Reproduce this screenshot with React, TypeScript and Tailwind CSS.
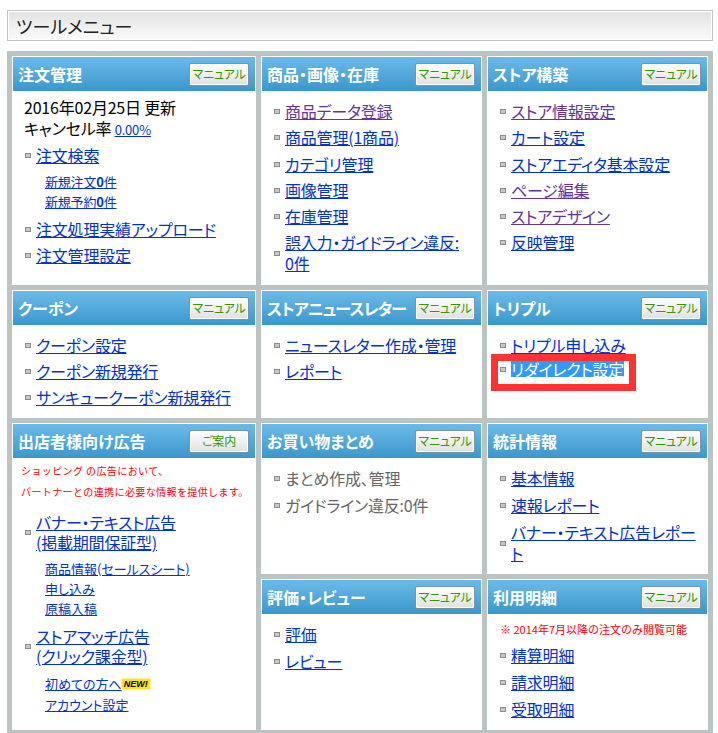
import React from "react";

const LINK = "underline text-[#0033cc]";
const VISITED = "underline text-[#663399]";

function Bullet() {
  return <span className="block w-[6px] h-[5px] shrink-0 border border-[#8c8c8c] bg-[#c8c8c8]" />;
}

function Item({
  children,
  cls = LINK,
  className = "",
}: {
  children: React.ReactNode;
  cls?: string;
  className?: string;
}) {
  return (
    <li className={`flex items-center ${className}`}>
      <Bullet />
      <a href="#" className={`ml-[5px] ${cls}`}>
        {children}
      </a>
    </li>
  );
}

function PlainItem({ children }: { children: React.ReactNode }) {
  return (
    <li className="flex items-center">
      <Bullet />
      <span className="ml-[5px] text-[#666666]">{children}</span>
    </li>
  );
}

function HeadBtn({ label }: { label: string }) {
  return (
    <span className="w-[60px] h-[23px] shrink-0 flex items-center justify-center whitespace-nowrap border border-[#7b93a7] rounded-[2px] bg-linear-to-b from-white to-[#e0e0e0] shadow-[inset_0_0_0_1px_#ffffff] text-[12px] tracking-[-0.2px] leading-none text-[#339900]">
      {label}
    </span>
  );
}

function Panel({
  title,
  btn = "マニュアル",
  className = "",
  titleClass = "",
  children,
}: {
  title: string;
  btn?: string;
  className?: string;
  titleClass?: string;
  children?: React.ReactNode;
}) {
  return (
    <section className={`bg-white p-px flex flex-col min-h-0 ${className}`}>
      <div className="h-[34px] shrink-0 flex items-center justify-between pl-[5px] pr-[6px] bg-linear-to-b from-[#6bbbe9] to-[#3a97cc]">
        <h2 className={`text-white text-[16px] font-bold leading-none whitespace-nowrap ${titleClass}`}>{title}</h2>
        <HeadBtn label={btn} />
      </div>
      <div className="flex-1">{children}</div>
    </section>
  );
}

function List({ children, gap, pt = "pt-[10px]" }: { children: React.ReactNode; gap: string; pt?: string }) {
  return (
    <ul className={`pl-[12px] ${pt} flex flex-col ${gap} text-[16px] leading-[21px] tracking-[-0.2px]`}>{children}</ul>
  );
}

export default function App() {
  return (
    <div className="w-[718px] min-h-[733px] bg-white overflow-hidden font-['Noto_Sans_CJK_JP','Noto_Sans',sans-serif] [font-feature-settings:'palt'] text-black">
      <div className="ml-[7px] mt-[10px] w-[706px] h-[31px] border border-[#c2c2c2] bg-linear-to-b from-[#e2e2e2] to-[#fbfbfb] shadow-[inset_0_0_0_1px_#ffffff] flex items-center pl-[8px]">
        <h1 className="text-[18px] leading-none font-normal text-[#222222]">ツールメニュー</h1>
      </div>

      <div className="ml-[7px] mt-[10px] w-[706px] bg-[#bcc4c3] p-[5px] grid grid-cols-[244px_221px_221px] grid-rows-[229px_128px_151px_151px] gap-[5px]">
        {/* Row 1 */}
        <Panel title="注文管理">
          <div className="pl-[11px] pt-[6px] text-[16px] leading-[21px] tracking-[-0.2px]">
            <p>2016年02月25日 更新</p>
            <p>
              キャンセル率{" "}
              <a href="#" className={`text-[13px] ${LINK}`}>
                0.00%
              </a>
            </p>
            <ul className="mt-[4px] pl-px leading-[22px]">
              <Item>注文検索</Item>
            </ul>
            <ul className="mt-[6px] pl-[21px] text-[13px] leading-[20px]">
              <li>
                <a href="#" className={LINK}>
                  新規注文<b>0</b>件
                </a>
              </li>
              <li>
                <a href="#" className={LINK}>
                  新規予約<b>0</b>件
                </a>
              </li>
            </ul>
            <ul className="mt-[6px] pl-px flex flex-col gap-[4px] leading-[22px]">
              <Item>注文処理実績アップロード</Item>
              <Item>注文管理設定</Item>
            </ul>
          </div>
        </Panel>

        <Panel title="商品・画像・在庫">
          <List gap="gap-[5.3px]">
            <Item cls={VISITED}>商品データ登録</Item>
            <Item>商品管理(1商品)</Item>
            <Item>カテゴリ管理</Item>
            <Item>画像管理</Item>
            <Item>在庫管理</Item>
            <Item>
              誤入力・ガイドライン違反:
              <br />
              0件
            </Item>
          </List>
        </Panel>

        <Panel title="ストア構築">
          <List gap="gap-[5.3px]">
            <Item cls={VISITED}>ストア情報設定</Item>
            <Item>カート設定</Item>
            <Item>ストアエディタ基本設定</Item>
            <Item cls={VISITED}>ページ編集</Item>
            <Item cls={VISITED}>ストアデザイン</Item>
            <Item>反映管理</Item>
          </List>
        </Panel>

        {/* Row 2 */}
        <Panel title="クーポン">
          <List gap="gap-[5px]">
            <Item>クーポン設定</Item>
            <Item>クーポン新規発行</Item>
            <Item>サンキュークーポン新規発行</Item>
          </List>
        </Panel>

        <Panel title="ストアニュースレター" titleClass="tracking-[-0.8px]">
          <List gap="gap-[5px]">
            <Item>ニュースレター作成・管理</Item>
            <Item>レポート</Item>
          </List>
        </Panel>

        <Panel title="トリプル">
          <List gap="gap-[5px]">
            <Item>トリプル申し込み</Item>
            <li className="relative flex items-center">
              <span className="pointer-events-none absolute left-[-9px] top-[-7px] w-[145px] h-[37px] border-[7px] border-[#ff3333]" />
              <Bullet />
              <a href="#" className="ml-[5px] inline-block leading-[16px] bg-[#3399ff] text-white underline">
                リダイレクト設定
              </a>
            </li>
          </List>
        </Panel>

        {/* Row 3 */}
        <Panel title="出店者様向け広告" btn="ご案内" className="row-span-2">
          <div className="pl-[8px] pt-[2px]">
            <p className="text-[10px] leading-[21px] tracking-[0.4px] text-[#ff0000] [font-feature-settings:normal]">
              ショッピング の広告において、
            </p>
            <p className="text-[10px] leading-[21px] tracking-[0.4px] text-[#ff0000] [font-feature-settings:normal]">
              パートナーとの連携に必要な情報を提供します。
            </p>
            <ul className="mt-[10px] pl-[4px] text-[16px] leading-[20px] tracking-[-0.2px]">
              <Item>
                バナー・テキスト広告
                <br />
                (掲載期間保証型)
              </Item>
            </ul>
            <ul className="mt-[7px] pl-[24px] text-[13px] leading-[20px]">
              <li>
                <a href="#" className={LINK}>
                  商品情報(セールスシート)
                </a>
              </li>
              <li>
                <a href="#" className={LINK}>
                  申し込み
                </a>
              </li>
              <li>
                <a href="#" className={LINK}>
                  原稿入稿
                </a>
              </li>
            </ul>
            <ul className="mt-[7px] pl-[4px] text-[16px] leading-[20px] tracking-[-0.2px]">
              <Item>
                ストアマッチ広告
                <br />
                (クリック課金型)
              </Item>
            </ul>
            <ul className="mt-[7px] pl-[24px] text-[13px] leading-[21px]">
              <li className="flex items-center">
                <a href="#" className={LINK}>
                  初めての方へ
                </a>
                <span className="inline-block px-[2px] bg-[#ffe414] text-black font-['Liberation_Sans',sans-serif] font-bold italic text-[9px] leading-[10px] shadow-[0_0_2px_#ffd700]">
                  NEW!
                </span>
              </li>
              <li>
                <a href="#" className={LINK}>
                  アカウント設定
                </a>
              </li>
            </ul>
          </div>
        </Panel>

        <Panel title="お買い物まとめ">
          <List gap="gap-[6px]">
            <PlainItem>まとめ作成、管理</PlainItem>
            <PlainItem>ガイドライン違反:0件</PlainItem>
          </List>
        </Panel>

        <Panel title="統計情報">
          <List gap="gap-[6px]">
            <Item>基本情報</Item>
            <Item>速報レポート</Item>
            <Item>
              バナー・テキスト広告レポー
              <br />ト
            </Item>
          </List>
        </Panel>

        <Panel title="評価・レビュー">
          <List gap="gap-[6px]">
            <Item>評価</Item>
            <Item>レビュー</Item>
          </List>
        </Panel>

        <Panel title="利用明細">
          <div className="pt-[5px]">
            <p className="pl-[12px] text-[11px] leading-[21px] text-[#ff0000] [font-feature-settings:normal]">
              ※ 2014年7月以降の注文のみ閲覧可能
            </p>
            <List gap="gap-[6px]" pt="pt-[5px]">
              <Item>精算明細</Item>
              <Item>請求明細</Item>
              <Item>受取明細</Item>
            </List>
          </div>
        </Panel>
      </div>
    </div>
  );
}
